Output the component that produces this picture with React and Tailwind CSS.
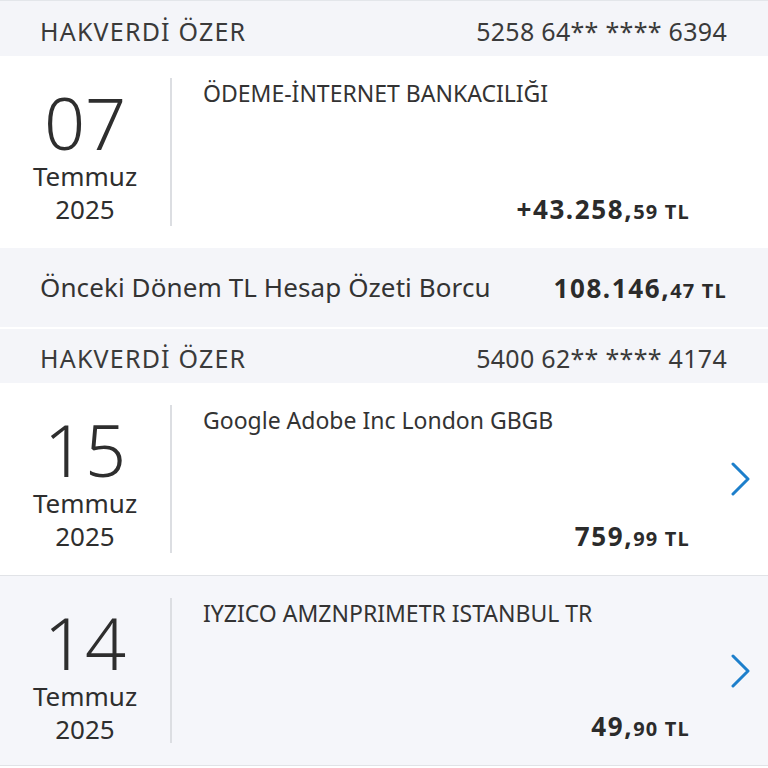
const font = { fontFamily: '"Noto Sans", "Open Sans", sans-serif' }

function Chevron() {
    return (
        <svg width="20" height="34" viewBox="0 0 20 34" fill="none" className="text-[#1d7fcb]">
            <polyline points="2,2 17,17 2,32" stroke="currentColor" strokeWidth="3" strokeLinecap="round" strokeLinejoin="round" />
        </svg>
    )
}

function Header({ name, card, first }) {
    return (
        <div className={`flex items-center justify-between bg-[#f4f5f9] pl-[40px] pr-[41px] pt-[6px] text-[25px] text-[#3a3a3a] ${first ? "h-[55px]" : "h-[54px]"}`}>
            <span className="tracking-[1.2px]">{name}</span>
            <span className="tracking-[0.3px]">{card}</span>
        </div>
    )
}

function Amount({ whole, cents }) {
    return (
        <span className="font-bold text-[#2b2b2b] leading-none">
            <span className="text-[26px] tracking-[1.6px]">{whole}</span>
            <span className="text-[20px] tracking-[1.2px]">{cents} TL</span>
        </span>
    )
}

function Row({ day, desc, whole, cents, arrow, gray }) {
    return (
        <div className={`flex ${gray ? "h-[191px] bg-[#f5f6fa] border-t border-b border-[#e1e3e7]" : "h-[192px] bg-white"}`}>
            <div className="flex w-[170px] flex-col items-center pt-[34px] text-[#2e2e2e]">
                <span className="text-[72px] font-light leading-[64px]">{day}</span>
                <span className="mt-[6px] text-[26px] leading-[33px]">Temmuz</span>
                <span className="text-[26px] leading-[33px]">2025</span>
            </div>
            <div className="my-[22px] w-[2px] bg-[#dcdee2]" />
            <div className="flex flex-1 flex-col justify-between pl-[31px] pt-[23px] pb-[23px]">
                <span className="text-[23px] leading-[28px] text-[#333]">{desc}</span>
                <div className="self-end">
                    <Amount whole={whole} cents={cents} />
                </div>
            </div>
            <div className="flex w-[78px] items-center pl-[41px]">
                {arrow && <Chevron />}
            </div>
        </div>
    )
}

export default function App() {
    return (
        <div className="w-[768px] h-[768px] overflow-hidden bg-white" style={font}>
            <div className="h-px bg-[#e3e6ea]" />
            <Header first name="HAKVERDİ ÖZER" card="5258 64** **** 6394" />
            <Row day="07" desc="ÖDEME-İNTERNET BANKACILIĞI" whole="+43.258," cents="59" />
            <div className="flex h-[79px] items-center justify-between bg-[#f4f5f9] pl-[40px] pr-[41px] text-[#333]">
                <span className="text-[26px] tracking-[0.1px]">Önceki Dönem TL Hesap Özeti Borcu</span>
                <Amount whole="108.146," cents="47" />
            </div>
            <div className="h-[2px] bg-white" />
            <Header name="HAKVERDİ ÖZER" card="5400 62** **** 4174" />
            <Row day="15" desc="Google Adobe Inc London GBGB" whole="759," cents="99" arrow />
            <Row day="14" desc="IYZICO AMZNPRIMETR ISTANBUL TR" whole="49," cents="90" arrow gray />
        </div>
    )
}
